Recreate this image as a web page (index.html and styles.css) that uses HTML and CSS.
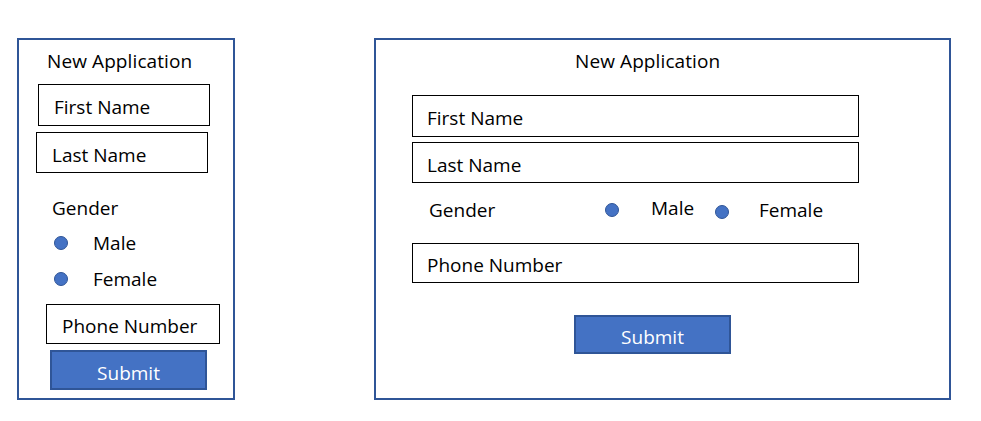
FILE: index.html
```html
<!DOCTYPE html>
<html lang="en">
<head>
<meta charset="utf-8">
<title>New Application wireframes</title>
<link rel="stylesheet" href="styles.css">
</head>
<body>
<div class="canvas">
  <section class="frame frame-narrow">
    <h1 class="title">New Application</h1>
    <div class="field n-first">First Name</div>
    <div class="field n-last">Last Name</div>
    <div class="n-gender">Gender</div>
    <div class="n-radio n-male"><span class="dot"></span><span class="opt">Male</span></div>
    <div class="n-radio n-female"><span class="dot"></span><span class="opt">Female</span></div>
    <div class="field n-phone">Phone Number</div>
    <div class="button n-submit">Submit</div>
  </section>
  <section class="frame frame-wide">
    <h1 class="title w-title">New Application</h1>
    <div class="field w-first">First Name</div>
    <div class="field w-last">Last Name</div>
    <div class="w-gender">
      <span class="w-label">Gender</span>
      <span class="dot w-dot1"></span>
      <span class="w-male">Male</span>
      <span class="dot w-dot2"></span>
      <span class="w-female">Female</span>
    </div>
    <div class="field w-phone">Phone Number</div>
    <div class="button w-submit">Submit</div>
  </section>
</div>
</body>
</html>
```
FILE: styles.css
```css
html, body {
  margin: 0;
  padding: 0;
  background: #ffffff;
}
body {
  font-family: "Open Sans", "Noto Sans", sans-serif;
  font-size: 19px;
  line-height: 24px;
  color: #000000;
  width: 981px;
  height: 421px;
  overflow: hidden;
}
.canvas {
  display: flex;
  align-items: flex-start;
  padding-top: 38px;
}
.frame {
  box-sizing: border-box;
  border: 2px solid #2f5597;
  height: 362px;
}
.frame-narrow {
  width: 218px;
  margin-left: 17px;
}
.frame-wide {
  width: 577px;
  margin-left: 139px;
}
.title {
  margin: 9px 0 0 0;
  font-size: 19px;
  font-weight: normal;
  line-height: 24px;
  padding-left: 28px;
  letter-spacing: 0.1px;
}
.field {
  box-sizing: border-box;
  border: 1.5px solid #000000;
  display: flex;
  align-items: center;
  padding-top: 4px;
}
.dot {
  box-sizing: border-box;
  display: block;
  width: 14px;
  height: 14px;
  border-radius: 50%;
  background: #4472c4;
  border: 1.5px solid #2f5597;
  flex: none;
}
.button {
  box-sizing: border-box;
  background: #4472c4;
  border: 2px solid #2f5597;
  color: #ffffff;
  display: flex;
  align-items: center;
  justify-content: center;
  padding-top: 5px;
}

/* narrow (mobile) frame */
.n-first {
  margin: 11px 0 0 19px;
  width: 172px;
  height: 42px;
  padding-left: 15px;
}
.n-last {
  margin: 6px 0 0 17px;
  width: 172px;
  height: 41px;
  padding-left: 15px;
}
.n-gender {
  margin: 23px 0 0 33px;
}
.n-radio {
  display: flex;
  align-items: center;
  height: 24px;
  padding-left: 35px;
}
.n-radio .opt {
  margin-left: 25px;
}
.n-male {
  margin-top: 11px;
}
.n-female {
  margin-top: 12px;
}
.n-phone {
  margin: 13px 0 0 27px;
  width: 174px;
  height: 40px;
  padding-left: 15px;
}
.n-submit {
  margin: 6px 0 0 31px;
  width: 157px;
  height: 40px;
}

/* wide (desktop) frame */
.w-title {
  padding-left: 199px;
}
.w-first {
  margin: 22px 0 0 36px;
  width: 447px;
  height: 42px;
  padding-left: 14px;
}
.w-last {
  margin: 5px 0 0 36px;
  width: 447px;
  height: 41px;
  padding-left: 14px;
}
.w-gender {
  display: flex;
  align-items: flex-start;
  height: 24px;
  margin-top: 15px;
  padding-left: 53px;
}
.w-label {
  width: 176px;
}
.w-dot1 {
  margin-top: 5px;
}
.w-male {
  width: 64px;
  margin-left: 32px;
  margin-top: -2px;
}
.w-dot2 {
  margin-top: 7px;
}
.w-female {
  margin-left: 30px;
}
.w-phone {
  margin: 21px 0 0 36px;
  width: 447px;
  height: 40px;
  padding-left: 14px;
}
.w-submit {
  margin: 32px 0 0 198px;
  width: 157px;
  height: 39px;
}
```
